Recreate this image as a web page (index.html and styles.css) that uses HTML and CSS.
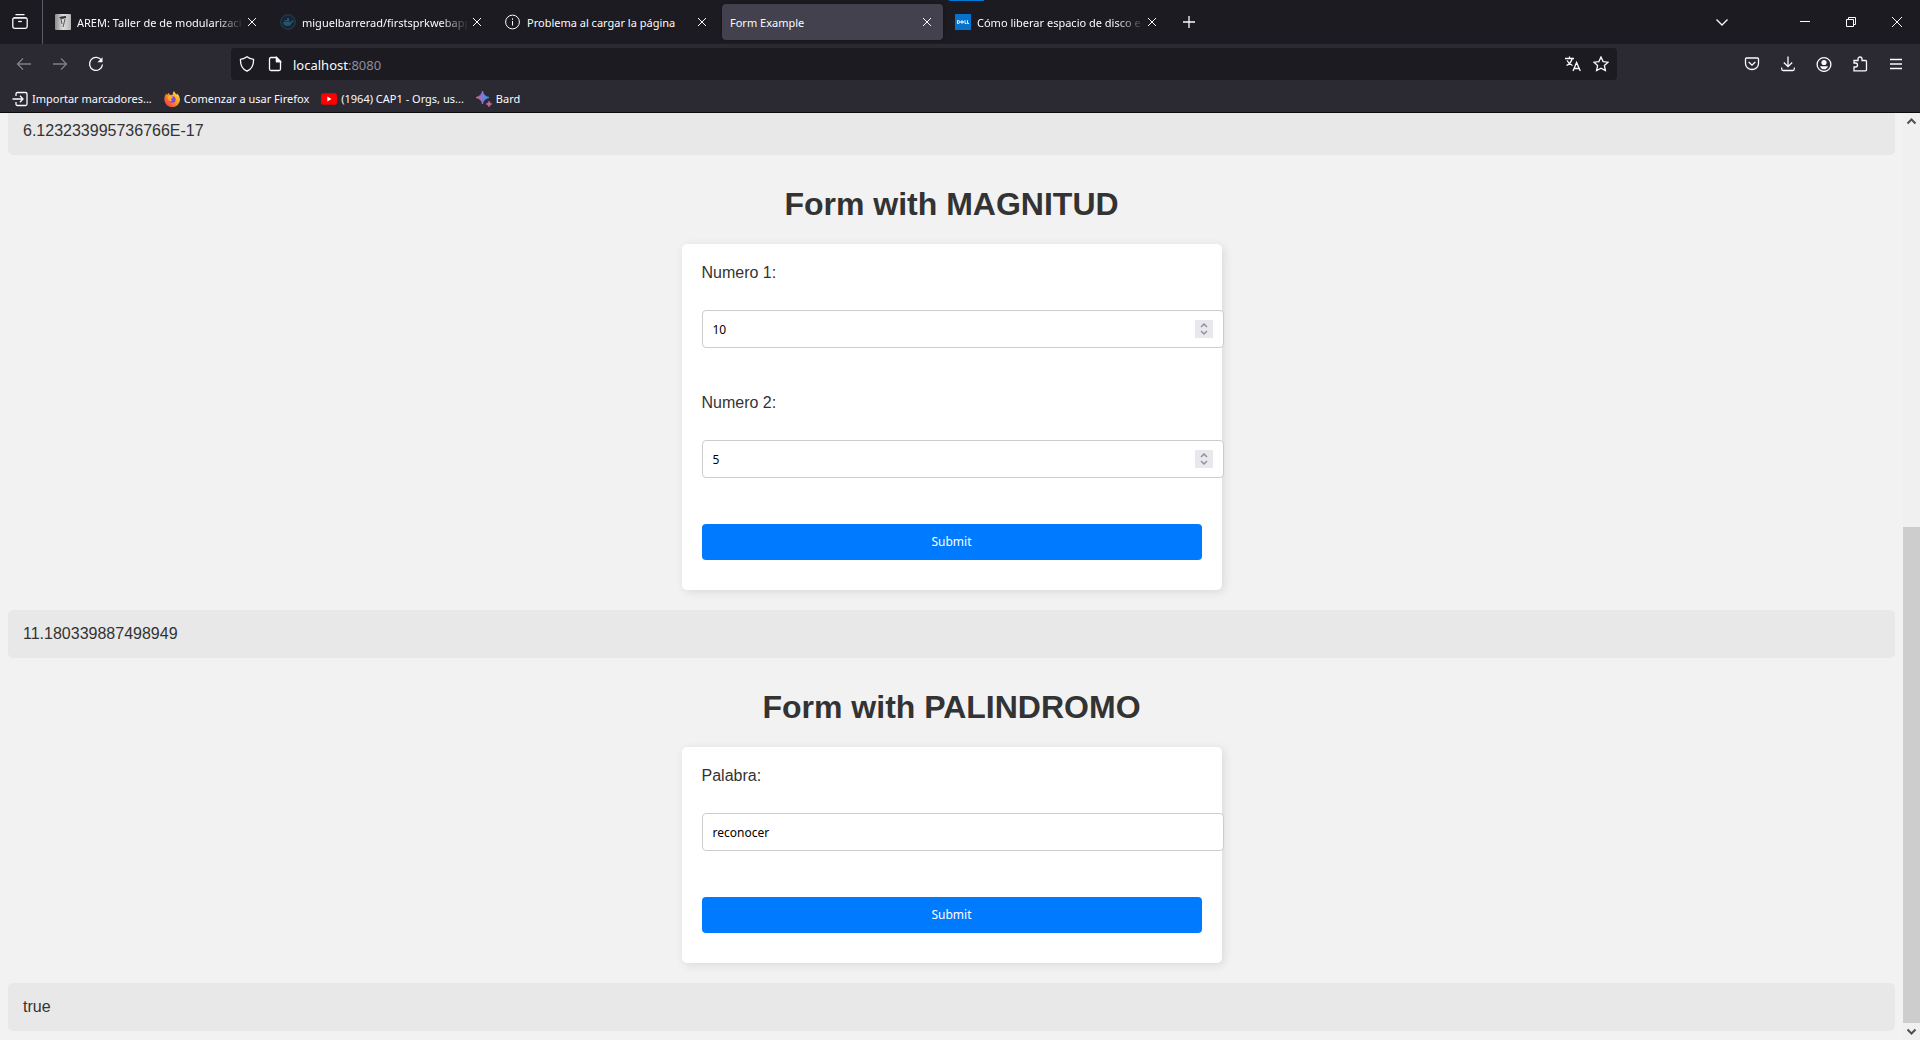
FILE: index.html
```html
<!DOCTYPE html>
<html lang="es">
<head>
<meta charset="utf-8">
<meta name="viewport" content="width=device-width, initial-scale=1">
<title>Form Example</title>
<link rel="stylesheet" href="styles.css">
</head>
<body>
<header class="browser">
  <div class="tabbar">
    <button class="tabbar-view" aria-label="Vista"><svg class="icon" viewBox="0 0 16 16"><path d="M3.5.7h9M1.6 3.8h12.8"/><rect x=".8" y="3.8" width="14.4" height="10.6" rx="1.8"/><path d="M6.2 7.5h3.6"/></svg></button>
    <div class="tabs">
      <div class="tab">
        <svg class="favicon" viewBox="0 0 16 16"><defs><linearGradient id="paper" x2="1"><stop offset="0" stop-color="#8b8b8b"/><stop offset=".5" stop-color="#ddd"/><stop offset="1" stop-color="#b5b5b5"/></linearGradient></defs><rect width="16" height="16" rx="1" fill="url(#paper)"/><path d="M4 4q1-2 7-2v2L7 5z" fill="#333"/><path d="M6 5l1 5M10 5L9 9l-1 4" fill="none" stroke="#555"/></svg>
        <span class="tab-title tab-title--faded">AREM: Taller de de modularizaci</span>
        <button class="tab-close" aria-label="Cerrar"><svg class="cross" viewBox="0 0 10 10"><path d="M1 1l8 8M9 1L1 9"/></svg></button>
      </div>
      <div class="tab">
        <svg class="favicon" viewBox="0 0 16 16"><circle cx="8" cy="8" r="7.3" fill="#182431" stroke="#24455a"/><path d="M3 8h8q1-2 1-2 1 1 2 1-1 1.500-2 1.500-1 3.500-5 3.500Q3.500 12 3 8zM4.500 6h5v1.500h-5zM7 4h2v2H7z" fill="#28536f"/></svg>
        <span class="tab-title tab-title--faded">miguelbarrerad/firstsprkwebapp</span>
        <button class="tab-close" aria-label="Cerrar"><svg class="cross" viewBox="0 0 10 10"><path d="M1 1l8 8M9 1L1 9"/></svg></button>
      </div>
      <div class="tab">
        <svg class="favicon line" viewBox="0 0 16 16"><circle cx="7.500" cy="8" r="6.900"/><path d="M7.500 7v4.500M7.500 4.300v1.500"/></svg>
        <span class="tab-title">Problema al cargar la página</span>
        <button class="tab-close" aria-label="Cerrar"><svg class="cross" viewBox="0 0 10 10"><path d="M1 1l8 8M9 1L1 9"/></svg></button>
      </div>
      <div class="tab tab--active">
        <span class="tab-title">Form Example</span>
        <button class="tab-close" aria-label="Cerrar"><svg class="cross" viewBox="0 0 10 10"><path d="M1 1l8 8M9 1L1 9"/></svg></button>
      </div>
      <div class="tab">
        <svg class="favicon" viewBox="0 0 16 16"><path fill="#0672cb" d="M0 0h16v16H0z"/><path d="M2.500 6.500v3M2.500 6.500q2.500 0 2.500 1.500t-2.500 1.500M5.500 8l1.500-1.300L8.700 8 7 9.300zM6 8h2.500M10 6.200v3.300h1.500M12.500 6.200v3.300H14" fill="none" stroke="#fff" stroke-width=".9"/></svg>
        <span class="tab-title tab-title--faded">Cómo liberar espacio de disco e</span>
        <button class="tab-close" aria-label="Cerrar"><svg class="cross" viewBox="0 0 10 10"><path d="M1 1l8 8M9 1L1 9"/></svg></button>
      </div>
    </div>
    <button class="tab-new" aria-label="Nueva pestaña"><svg class="icon" viewBox="0 0 16 16"><path d="M8 2v12M2 8h12"/></svg></button>
    <div class="window-buttons">
      <button class="list-tabs" aria-label="Listar pestañas"><svg class="icon" viewBox="0 0 16 16"><path d="M2.500 5.500L8 11l5.500-5.500"/></svg></button>
      <button aria-label="Minimizar"><svg class="caption" viewBox="0 0 10 10"><path d="M0 4.500h10"/></svg></button>
      <button aria-label="Restaurar"><svg class="caption" viewBox="0 0 10 10"><path d="M.5 2.500h7v7h-7zM2.500 2.500v-2h7v7h-2"/></svg></button>
      <button aria-label="Cerrar ventana"><svg class="caption" viewBox="0 0 10 10"><path d="M0 0l10 10M10 0L0 10"/></svg></button>
    </div>
  </div>
  <nav class="toolbar">
    <div class="toolbar-nav">
      <button class="dim" aria-label="Atrás"><svg class="icon" viewBox="0 0 16 16"><path d="M15 8H1.500M7 2.500L1.500 8 7 13.500"/></svg></button>
      <button class="dim" aria-label="Adelante"><svg class="icon" viewBox="0 0 16 16"><path d="M1 8h13.500M9 2.500L14.500 8 9 13.500"/></svg></button>
      <button aria-label="Recargar"><svg class="icon" viewBox="0 0 16 16"><path d="M13.600 4.500A6.500 6.500 0 1 0 14.500 8.500"/><path d="M14.500 1.200v5H9.500z" fill="currentColor" stroke="none"/></svg></button>
    </div>
    <div class="urlbar">
      <svg class="icon" viewBox="0 0 16 16"><path d="M8 .8Q10.500 3 14.500 3.300 15 12 8 15.200 1 12 1.500 3.300 5.500 3 8 .8z"/></svg>
      <svg class="icon" viewBox="0 0 16 16"><path d="M9.500 1.500H4q-1.500 0-1.500 1.500v10q0 1.500 1.500 1.500h8q1.500 0 1.500-1.500V5.500zv4h4"/><path d="M9.500 1.500l4 4h-4z" fill="currentColor"/></svg>
      <span class="url">localhost<span class="url-port">:8080</span></span>
      <button aria-label="Traducir"><svg class="icon" viewBox="0 0 16 16"><path d="M0 2.500h9M4.500.5v2M1.500 9.500Q6 7.500 7.200 2.500M2 4.500q1.500 3 5.500 5M8 15l3.600-8.500L15.300 15M9.200 12.500h5"/></svg></button>
      <button aria-label="Marcador"><svg class="icon" viewBox="0 0 16 16"><path d="M8 1l2.100 4.600 5 .6-3.700 3.400 1 5L8 12.200l-4.400 2.400 1-5L.9 6.200l5-.6z"/></svg></button>
    </div>
    <div class="toolbar-tools">
      <button aria-label="Pocket"><svg class="icon" viewBox="0 0 16 16"><path d="M2.500 2h11q1 0 1 1v4.500a6.500 6 0 0 1-13 0V3q0-1 1-1zM4.700 6L8 9.200 11.300 6"/></svg></button>
      <button aria-label="Descargas"><svg class="icon" viewBox="0 0 16 16"><path d="M8 .5v10M3.800 6.500L8 10.700l4.200-4.200M1.700 11.500V13q0 1.500 1.500 1.500h9.600q1.500 0 1.500-1.500v-1.500"/></svg></button>
      <button aria-label="Cuenta"><svg class="icon" viewBox="0 0 16 16"><circle cx="8" cy="8.500" r="6.900"/><circle cx="8" cy="6.500" r="2.600" fill="currentColor" stroke="none"/><path d="M4 10.200h8Q11 13.300 8 13.300T4 10.200z" fill="currentColor" stroke="none"/></svg></button>
      <button aria-label="Extensiones"><svg class="icon" viewBox="0 0 16 16"><path d="M2 14.800V11h1.500a2 2 0 0 0 0-4H2V4.500h4V3a2 2 0 0 1 4 0v1.500h3.500q1 0 1 1v8.300q0 1-1 1z"/></svg></button>
      <button aria-label="Menú"><svg class="icon" viewBox="0 0 16 16"><path d="M2 3.500h12M2 8h12M2 12.500h12"/></svg></button>
    </div>
  </nav>
  <div class="bookmarks">
    <a href="#"><svg class="icon" viewBox="0 0 16 16"><path d="M4 5V3q0-1.500 1.500-1.500h8Q15 1.500 15 3v10q0 1.500-1.500 1.500h-8Q4 14.500 4 13v-2M.5 8h10M8 4.800L11 8l-3 3.200"/></svg>Importar marcadores...</a>
    <a href="#"><svg class="favicon" viewBox="0 0 16 16"><defs><linearGradient id="flame" x1="1" x2="0" y2="1"><stop offset="0" stop-color="#fff24a"/><stop offset=".45" stop-color="#ff9a20"/><stop offset="1" stop-color="#f0205a"/></linearGradient></defs><path d="M10 0q1 2.500 3 3.800.3-1 .1-1.600Q16 5 16 8.600A7.800 7.500 0 0 1 .3 8.600Q.2 5 2.200 2.600l.6 1.300L5 1.800l.5 2L8.500 4Q8.700 1.500 10 0z" fill="url(#flame)"/><circle cx="8.300" cy="8.500" r="3.300" fill="#8045dd"/><path d="M3.500 5.500q2-1.500 4.500-.3L9 6.800 6.800 8l1.500 1.500L6 10.500Q4 9 3.500 5.500z" fill="#ffae25"/></svg>Comenzar a usar Firefox</a>
    <a href="#"><svg class="favicon" viewBox="0 0 16 16"><rect y="2.300" width="16" height="11.400" rx="2.500" fill="#f00"/><path d="M6.300 5.500L10.500 8l-4.200 2.500z" fill="#fff"/></svg>(1964) CAP1 - Orgs, us...</a>
    <a href="#"><svg class="favicon" viewBox="0 0 16 16"><defs><linearGradient id="spark"><stop offset="0" stop-color="#e06a63"/><stop offset=".5" stop-color="#8176d8"/><stop offset="1" stop-color="#16a5f3"/></linearGradient></defs><path d="M6.500 0Q7.500 5.500 13 6.500 7.500 7.500 6.500 13 5.500 7.500 0 6.500 5.500 5.500 6.500 0z" fill="url(#spark)" stroke="url(#spark)"/><path d="M13 10q.5 2.500 3 3-2.500.5-3 3-.5-2.500-3-3 2.500-.5 3-3z" fill="#c7679b" stroke="#c7679b" stroke-width=".6"/></svg>Bard</a>
  </div>
</header>

<div class="viewport">
  <main class="page">
    <div class="result result--clipped">6.123233995736766E-17</div>

    <h1>Form with MAGNITUD</h1>
    <form class="card">
      <label for="n1">Numero 1:</label>
      <div class="field">
        <input type="number" id="n1" value="10">
        <span class="spinner"><svg viewBox="0 0 18 18"><path d="M6 7l3-3 3 3M6 11l3 3 3-3"/></svg></span>
      </div>
      <label for="n2">Numero 2:</label>
      <div class="field">
        <input type="number" id="n2" value="5">
        <span class="spinner"><svg viewBox="0 0 18 18"><path d="M6 7l3-3 3 3M6 11l3 3 3-3"/></svg></span>
      </div>
      <button class="submit" type="button">Submit</button>
    </form>
    <div class="result">11.180339887498949</div>

    <h1>Form with PALINDROMO</h1>
    <form class="card">
      <label for="word">Palabra:</label>
      <div class="field"><input type="text" id="word" value="reconocer"></div>
      <button class="submit" type="button">Submit</button>
    </form>
    <div class="result">true</div>
  </main>
  <div class="scrollbar">
    <svg class="arrow" viewBox="0 0 17 17"><path d="M4.500 10.500l4-4 4 4"/></svg>
    <div class="track"><div class="thumb"></div></div>
    <svg class="arrow" viewBox="0 0 17 17"><path d="M4.500 6.500l4 4 4-4"/></svg>
  </div>
</div>
</body>
</html>
```
FILE: styles.css
```css
* { box-sizing: border-box; }

body {
  margin: 0;
  height: 100vh;
  display: flex;
  flex-direction: column;
  overflow: hidden;
  background: #f2f2f2;
  color: #333;
  font: 16px/18px "Liberation Sans", Arial, sans-serif;
}

button {
  border: 0;
  padding: 0;
  background: none;
  color: inherit;
  font: inherit;
}

/* Browser window */
.browser {
  flex: none;
  background: #2b2a33;
  border-bottom: 1px solid #0c0c0d;
  color: #fbfbfe;
  font: 11px/16px "Noto Sans", "Open Sans", sans-serif;
}

.browser button {
  display: flex;
  align-items: center;
  justify-content: center;
}

.icon, .favicon { flex: none; width: 16px; height: 16px; }
.icon, .line, .cross, .caption { fill: none; stroke: currentColor; }
.icon { stroke-width: 1.3; }
.cross { width: 10px; height: 10px; }
.caption { width: 10px; height: 10px; }

.tabbar {
  display: flex;
  align-items: center;
  height: 44px;
  background: #1c1b22;
}

.tabbar .tabbar-view {
  align-self: stretch;
  width: 43px;
  padding-right: 2px;
  border-right: 1px solid #5b5a63;
}

.tabs {
  display: flex;
  align-self: stretch;
  gap: 4px;
  margin-left: 4px;
}

.tab {
  display: flex;
  align-items: center;
  width: 221px;
  padding: 0 11px 0 8px;
  margin: 4px 0;
  border-radius: 4px;
}

.tab--active {
  background: #42414d;
  box-shadow: 0 0 2px #111;
}

.tab:last-child {
  margin-top: 0;
  padding-top: 4px;
  background: linear-gradient(#0078d7, #0078d7) no-repeat -11px 0 / 48px 1px;
}

.tab-title {
  flex: 1;
  min-width: 0;
  padding-top: 1px;
  white-space: nowrap;
}

.tab-title--faded {
  -webkit-mask-image: linear-gradient(to left, transparent, #000 28px);
  mask-image: linear-gradient(to left, transparent, #000 28px);
}

.favicon + .tab-title { margin-left: 6px; }
.tab-close { flex: none; margin-left: 3px; }
.tab-new { margin-left: 5px; width: 32px; height: 32px; }

.window-buttons {
  display: flex;
  align-self: stretch;
  margin-left: auto;
}

.window-buttons button { width: 46px; }
.window-buttons .list-tabs { width: 36px; margin-right: 42px; }

.toolbar {
  display: flex;
  align-items: center;
  height: 40px;
  padding-right: 6px;
}

.toolbar-nav { display: flex; width: 231px; padding-left: 6px; }
.toolbar-nav button, .toolbar-tools button { width: 36px; height: 32px; }
.dim { opacity: .4; }

.urlbar {
  flex: 1;
  display: flex;
  align-items: center;
  gap: 12px;
  height: 32px;
  padding: 0 8px;
  border-radius: 4px;
  background: #1c1b22;
}

.url { flex: 1; margin-left: -2px; padding-top: 1px; font-size: 13px; }
.url-port { color: #8f8f9d; }
.toolbar-tools { display: flex; margin-left: 117px; }

.bookmarks {
  display: flex;
  align-items: center;
  gap: 12px;
  height: 28px;
  padding: 1px 0 0 12px;
}

.bookmarks a {
  display: flex;
  align-items: center;
  gap: 4px;
  color: inherit;
  text-decoration: none;
}

/* Page */
.viewport { flex: 1; min-height: 0; display: flex; }
.page { flex: 1; min-width: 0; padding: 0 8px; overflow: hidden; }

.result {
  padding: 15px;
  border-radius: 5px;
  background: #e8e8e8;
}

.result--clipped { padding-top: 9px; border-radius: 0 0 5px 5px; }

h1 {
  margin: 31px 0 22px;
  font-size: 32px;
  line-height: 36px;
  text-align: center;
}

.card {
  max-width: 540px;
  margin: 0 auto 20px;
  padding: 20px 20px 30px;
  border-radius: 5px;
  background: #fff;
  box-shadow: 2px 2px 10px rgba(0, 0, 0, .1);
}

.card label { display: block; margin-bottom: 28px; }
.field { position: relative; margin: 0 -22px 46px 0; }

.field input {
  display: block;
  width: 100%;
  height: 38px;
  padding: 10px;
  border: 1px solid #ccc;
  border-radius: 4px;
  background: #fff;
  color: #000;
  font: 12px/16px "Noto Sans", "Open Sans", sans-serif;
  appearance: textfield;
}

.spinner {
  position: absolute;
  top: 10px;
  right: 11px;
  width: 18px;
  height: 18px;
  background: #e9e9ed;
}

.spinner svg { display: block; fill: none; stroke: #8f8f9d; stroke-width: 1.5; }

.submit {
  display: block;
  width: 100%;
  height: 36px;
  border-radius: 4px;
  background: #007bff;
  color: #fff;
  font: 12px/16px "Noto Sans", "Open Sans", sans-serif;
}

.scrollbar {
  flex: none;
  display: flex;
  flex-direction: column;
  width: 17px;
  background: #f0f0f0;
}

.arrow { flex: none; height: 17px; fill: none; stroke: #505050; stroke-width: 2; }
.track { flex: 1; display: flex; flex-direction: column; justify-content: flex-end; }
.thumb { height: 55.5%; background: #cdcdcd; }
```
